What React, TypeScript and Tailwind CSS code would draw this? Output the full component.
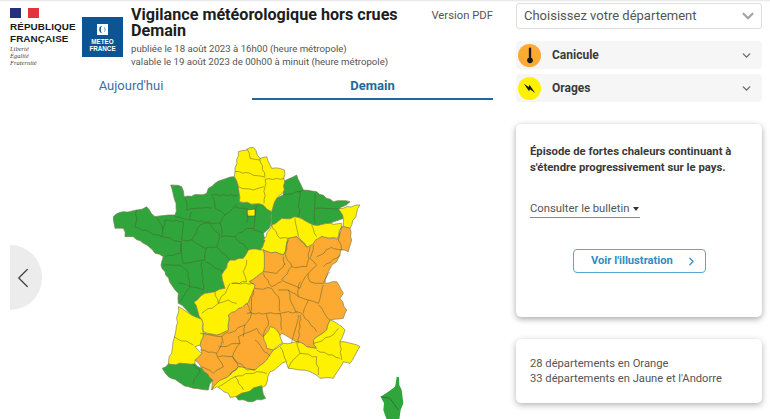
import React from "react";
import { ChevronDown, ChevronLeft, ChevronRight } from "lucide-react";

const GREEN = "#2fa53b";
const YELLOW = "#fff200";
const ORANGE = "#fdaa33";

const regions: [string, string][] = [
  [GREEN, "212,135 245,140 252,170 320,160 325,145 345,130 403,110 416,150 418,185 490,195 515,215 512,255 490,280 495,300 480,330 445,330 430,355 390,360 365,405 375,445 345,455 315,460 282,487 305,538 285,530 235,490 235,460 215,435 183,375 190,350 165,340 130,310 100,290 75,290 70,265 45,265 40,230 70,215 110,210 140,200 165,230 205,225 225,225 228,190"],
  [GREEN, "515,215 530,175 550,165 550,125 590,105 610,150 650,155 700,185 750,185 715,205 730,235 690,250 640,255 595,232 545,240 515,255"],
  [YELLOW, "403,110 405,95 415,35 460,22 480,55 500,50 515,85 553,90 553,150 530,175 515,215 490,195 418,185 416,150"],
  [YELLOW, "490,300 515,255 545,235 595,232 640,255 690,250 725,250 715,295 665,290 640,315 620,322 590,290 565,295 550,345 490,330 480,330 495,300"],
  [YELLOW, "715,205 780,195 750,265 730,260 730,235"],
  [ORANGE, "490,330 550,345 565,295 590,290 620,322 665,290 712,298 725,260 750,265 755,300 745,335 722,330 720,345 685,395 675,430 710,425 730,460 720,475 740,510 730,535 690,540 680,570 640,600 650,625 620,620 590,605 545,580 520,630 500,660 465,690 415,680 390,705 350,730 335,750 338,720 305,685 285,660 305,640 300,615 310,578 350,585 385,570 385,525 445,488 465,435 447,425 490,395"],
  [YELLOW, "365,405 390,360 430,355 445,330 480,330 490,330 490,395 447,425 465,435 445,488 385,525 385,570 350,585 310,575 305,538 282,487 315,460 345,455 375,445"],
  [YELLOW, "235,500 285,530 305,538 310,578 300,615 285,620 305,640 285,660 285,672 205,672 222,595 228,570"],
  [YELLOW, "490,590 510,560 530,570 548,610 520,630 500,625"],
  [YELLOW, "520,630 550,610 590,605 620,620 650,625 640,600 680,570 690,540 735,570 720,605 780,620 750,670 730,665 700,715 660,715 640,700 600,690 565,685 558,665 510,695 497,737 425,760 408,770 390,772 385,760 350,740 335,750 350,730 390,705 415,680 465,690 500,660"],
  [GREEN, "187,685 205,672 285,672 305,685 338,720 325,750 280,745 265,740 235,725 205,710"],
  [GREEN, "408,770 425,760 485,737 497,775 445,785 415,780"],
];

const lines = [
  "440,25 450,55 480,60", "480,55 495,110", "405,95 450,100 495,112", "416,140 460,150 492,140", "495,118 553,115", "495,118 492,190",
  "335,165 415,165", "255,175 260,210 335,205", "335,165 345,205 375,225 410,195", "225,230 270,240 275,215", "270,240 360,250", "360,250 375,225",
  "405,200 440,205 440,250", "470,195 460,270 490,280", "440,265 460,265", "360,250 365,290 405,290 440,265", "405,290 445,330",
  "300,255 330,250 360,290 350,320 315,325 275,300 300,255", "250,245 245,300 275,300", "250,245 195,240 185,290 245,305", "110,210 105,260 185,290", "165,230 190,270",
  "245,305 240,340 195,350", "240,310 250,370 315,360 320,325", "350,320 390,360", "315,365 345,385 370,395", "190,375 240,375 265,395 270,440", "305,365 310,450", "235,430 270,440 310,450", "270,440 235,490",
  "550,165 600,155 610,150", "600,155 595,232", "645,160 645,250", "645,205 720,205",
  "515,255 540,295 565,295", "585,235 595,290 620,320", "635,255 650,290",
  "550,350 555,375", "555,370 530,400 490,395", "565,300 555,340 575,380 620,380 630,320", "640,315 630,355 650,375 625,400 630,425", "575,380 545,420", "545,420 600,445 625,400",
  "630,425 670,430 690,395", "670,435 655,490", "690,320 725,330", "650,350 690,325", "670,380 720,345", "600,425 595,470 625,480 655,490", "725,260 715,300 725,330",
  "490,400 515,440 545,425", "465,445 515,445 535,470 540,515", "535,450 565,450 575,490 590,520", "565,450 595,470", "460,450 450,520",
  "440,490 455,520 435,555 385,580", "440,520 500,520 540,520 590,515 610,525 650,575", "625,480 610,520", "655,495 690,540", "500,520 505,555 490,590", "540,520 545,570",
  "595,525 575,610", "600,525 595,610", "435,555 430,590", "385,575 365,590 370,610", "300,580 365,590", "300,630 350,640 365,605", "355,620 420,610 415,590 470,565 490,590", "420,610 398,650",
  "355,650 398,650", "350,640 370,680 340,700 305,680", "398,650 440,690 465,690", "398,650 415,680 390,705", "465,600 510,650",
  "590,605 600,640 590,650", "600,640 650,650", "650,650 655,705", "650,630 720,655", "720,605 725,660", "640,610 690,590 715,565", "540,620 560,665", "590,650 565,685",
  "355,740 405,710 430,750", "405,710 470,695 500,700", "222,590 280,615", "345,455 355,490 305,520", "390,430 355,490 385,480 410,490", "395,430 460,430", "440,360 430,395 440,425 395,430", "280,672 300,690 280,730",
];

function wiggle(points: string, closed: boolean) {
  const p = points.split(" ").map((s) => s.split(",").map(Number));
  if (closed) p.push(p[0]);
  let d = `M${p[0][0]} ${p[0][1]}`;
  for (let i = 1; i < p.length; i++) {
    const [a, b] = [p[i - 1], p[i]];
    const rev = a[0] > b[0] || (a[0] === b[0] && a[1] > b[1]);
    const [s, e] = rev ? [b, a] : [a, b];
    const dx = e[0] - s[0];
    const dy = e[1] - s[1];
    const len = Math.hypot(dx, dy) || 1;
    const seed = Math.abs(s[0] * 7 + s[1] * 13 + e[0] * 17 + e[1] * 23);
    const steps = Math.max(1, Math.floor(len / 11));
    const pts: number[][] = [];
    for (let k = 1; k < steps; k++) {
      const amp = (((seed * (k + 3)) % 11) - 5) * 0.6;
      pts.push([s[0] + (dx * k) / steps - (dy / len) * amp, s[1] + (dy * k) / steps + (dx / len) * amp]);
    }
    if (rev) pts.reverse();
    for (const q of pts) d += `L${q[0].toFixed(1)} ${q[1].toFixed(1)}`;
    d += `L${b[0]} ${b[1]}`;
  }
  return closed ? d + "Z" : d;
}

function FranceMap() {
  return (
    <svg viewBox="0 0 930 837" className="block h-[279px] w-[310px] blur-[0.3px]">
      {regions.map(([fill, pts], i) => (
        <path key={i} d={wiggle(pts, true)} fill={fill} stroke="#7d7d4e" strokeWidth="2" strokeLinejoin="round" />
      ))}
      <polygon points="440,210 465,207 465,228 442,228" fill={YELLOW} stroke="#555" strokeWidth="2" />
      {lines.map((pts, i) => (
        <path key={i} d={wiggle(pts, false)} fill="none" stroke="#4e5a2e" strokeOpacity="0.72" strokeWidth="2" strokeLinejoin="round" />
      ))}
      <polygon points="890,710 897,712 898,735 905,750 910,790 902,810 898,838 860,838 855,825 850,810 852,790 842,770 865,755 885,740 888,725" fill={GREEN} />
      <polyline points="842,770 870,775 895,810" fill="none" stroke="#1f6b2b" strokeWidth="2.2" />
    </svg>
  );
}

function RepubliqueLogo() {
  return (
    <div className="flex w-[66px] flex-col pt-[8px]">
      <div className="flex h-[10px] w-[29px]">
        <div className="w-[11px] bg-[#27307f]" />
        <div className="w-[7px] bg-white" />
        <div className="w-[11px] bg-[#e1343f]" />
      </div>
      <div className="mt-[3px] font-['Liberation_Sans',sans-serif] text-[9.9px] font-bold leading-[11.5px] tracking-[0.1px] text-[#1a1a1a]">
        <div>RÉPUBLIQUE</div>
        <div>FRANÇAISE</div>
      </div>
      <div className="mt-[1px] font-['Liberation_Serif',serif] text-[6.5px] italic leading-[7px] text-[#444]">
        <div>Liberté</div>
        <div>Égalité</div>
        <div>Fraternité</div>
      </div>
    </div>
  );
}

function MeteoLogo() {
  return (
    <div className="mt-[17px] flex h-[40px] w-[41px] flex-col items-center bg-[#0d5492] pt-[7px] font-['Liberation_Sans',sans-serif] text-[6.3px] font-bold leading-[7px] text-white">
      <svg viewBox="0 0 12 12" className="mb-[3px] h-[11px] w-[11px]">
        <rect width="12" height="12" fill="#fff" />
        <path d="M6.4 2 A4 4 0 0 0 6.4 10 A2.2 4 0 0 1 6.4 2 Z" fill="#0d5492" />
        <path d="M7.4 3 A3.4 3.4 0 0 1 7.4 9 A5 5 0 0 0 7.4 3 Z" fill="#0d5492" />
      </svg>
      <div>METEO</div>
      <div>FRANCE</div>
    </div>
  );
}

function AlertRow({ label, color, children }: { label: string; color: string; children: React.ReactNode }) {
  return (
    <div className="flex h-[28px] items-center rounded-[4px] bg-[#f6f6f6] pl-[2px] pr-[9px]">
      <div className="flex h-[23px] w-[23px] items-center justify-center rounded-full" style={{ backgroundColor: color }}>
        {children}
      </div>
      <span className="ml-[11px] flex-1 text-[12px] font-bold text-[#3a3a3a]">{label}</span>
      <ChevronDown size={13} strokeWidth={2.4} className="text-[#666]" />
    </div>
  );
}

export default function App() {
  return (
    <div className="relative flex h-[419px] w-[770px] overflow-hidden bg-white font-['Roboto',sans-serif]">
      <div className="pointer-events-none absolute inset-x-0 top-0 h-[2px] bg-gradient-to-b from-[#e4e4e4] to-white" />

      <div className="w-[505px] shrink-0">
        <div className="flex h-[76px] pl-[10px]">
          <RepubliqueLogo />
          <div className="ml-[6px]">
            <MeteoLogo />
          </div>
          <div className="ml-[8px] w-[362px] pt-[7px]">
            <div className="flex items-start justify-between">
              <h1 className="text-[16.15px] font-bold leading-[16px] text-[#1d1d1d]">
                Vigilance météorologique hors crues
                <br />
                Demain
              </h1>
              <span className="pt-[2px] text-[11.3px] leading-[14px] text-[#555]">Version PDF</span>
            </div>
            <p className="mt-[3px] text-[9.65px] leading-[13px] text-[#555]">
              publiée le 18 août 2023 à 16h00 (heure métropole)
              <br />
              valable le 19 août 2023 de 00h00 à minuit (heure métropole)
            </p>
          </div>
        </div>
        <div className="flex h-[24px] pl-[10px] pr-[12px] text-[13px] leading-[20px]">
          <div className="flex-1 text-center text-[#3d6f9e]">Aujourd'hui</div>
          <div className="w-[241px] border-b-[2px] border-[#23689b] text-center font-bold text-[#23689b]">Demain</div>
        </div>
        <div className="ml-[100px] mt-[40px]">
          <FranceMap />
        </div>
      </div>

      <button className="absolute left-[10px] top-[245px] flex h-[65px] w-[32px] items-center overflow-visible rounded-r-full bg-[#ececec] text-[#444]">
        <ChevronLeft size={34} strokeWidth={0.9} className="-ml-[4px] shrink-0" />
      </button>

      <div className="ml-[11px] flex w-[246px] flex-col pt-[3px]">
        <div className="flex h-[26px] items-center justify-between rounded-[3px] border border-[#dedede] pl-[7px] pr-[4px] text-[13px] text-[#555]">
          <span>Choisissez votre département</span>
          <ChevronDown size={18} strokeWidth={3} className="text-[#a5a5a5]" />
        </div>
        <div className="mt-[12px] flex flex-col gap-[5px]">
          <AlertRow label="Canicule" color="#fdaa33">
            <svg viewBox="0 0 12 20" className="h-[17px] w-[10px]">
              <rect x="4.6" y="0.5" width="2.8" height="13" rx="1.4" fill="#1a1a1a" />
              <circle cx="6" cy="15.8" r="3.4" fill="#1a1a1a" />
            </svg>
          </AlertRow>
          <AlertRow label="Orages" color="#fff200">
            <svg viewBox="0 0 16 16" className="h-[13px] w-[13px]">
              <path d="M1 2 L7 6 L8 3.5 L15 13.5 L8.5 9 L7.5 11.5 Z" fill="#1a1a1a" />
            </svg>
          </AlertRow>
        </div>

        <div className="mt-[22px] flex h-[193px] flex-col rounded-[5px] bg-white pl-[14px] pr-[12px] pt-[20px] shadow-[0_2px_6px_rgba(0,0,0,0.35)]">
          <p className="text-[11.3px] font-bold leading-[16px] text-[#3a3a3a]">
            Épisode de fortes chaleurs continuant à
            <br />
            s'étendre progressivement sur le pays.
          </p>
          <div className="mt-[25px] flex h-[17px] w-[110px] items-start justify-between border-b border-[#888] text-[11.3px] leading-[15px] text-[#555]">
            <span>Consulter le bulletin</span>
            <span className="mr-[1px] mt-[6px] h-0 w-0 border-x-[3.5px] border-t-[4px] border-x-transparent border-t-[#333]" />
          </div>
          <button className="ml-[43px] mt-[31px] flex h-[24px] w-[133px] items-center rounded-[4px] border border-[#57a8cf] pl-[17px] pt-[1px] text-[11.2px] font-bold text-[#2f8cc4]">
            <span className="flex-1 text-left">Voir l'illustration</span>
            <ChevronRight size={13} strokeWidth={2.2} className="mr-[7px] text-[#2f8cc4]" />
          </button>
        </div>

        <div className="mt-[22px] flex h-[64px] flex-col justify-center rounded-[5px] bg-white pl-[14px] text-[11.2px] leading-[15.5px] text-[#555] shadow-[0_2px_6px_rgba(0,0,0,0.3)]">
          <div>28 départements en Orange</div>
          <div>33 départements en Jaune et l'Andorre</div>
        </div>
      </div>
    </div>
  );
}
